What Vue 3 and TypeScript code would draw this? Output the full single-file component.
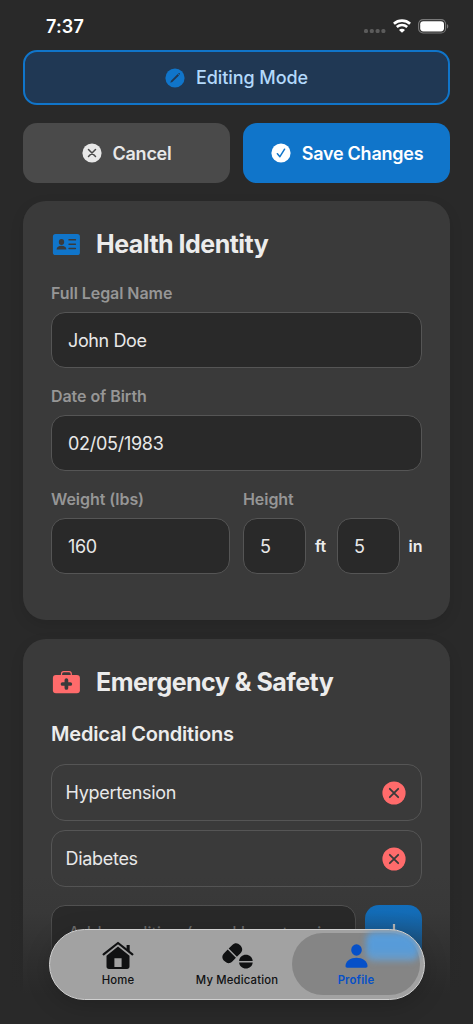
<script setup lang="ts">
import { ref } from 'vue'

interface Tab {
  id: string
  label: string
}

const fullName = ref('John Doe')
const birthDate = ref('02/05/1983')
const weight = ref('160')
const feet = ref('5')
const inches = ref('5')
const newCondition = ref('')
const conditions = ref<string[]>(['Hypertension', 'Diabetes'])
const activeTab = ref('profile')
const tabs: Tab[] = [
  { id: 'home', label: 'Home' },
  { id: 'medication', label: 'My Medication' },
  { id: 'profile', label: 'Profile' },
]

function removeCondition(index: number): void {
  conditions.value.splice(index, 1)
}

function addCondition(): void {
  const value = newCondition.value.trim()
  if (value) conditions.value.push(value)
  newCondition.value = ''
}
</script>

<template>
  <div class="screen">
    <header class="status">
      <span class="time">7:37</span>
      <div class="indicators">
        <svg class="dots" width="22" height="4" viewBox="0 0 22 4" fill="#5b5b5b">
          <rect x="0" width="4" height="4" rx="1.5" /><rect x="5.8" width="4" height="4" rx="1.5" />
          <rect x="11.6" width="4" height="4" rx="1.5" /><rect x="17.4" width="4" height="4" rx="1.5" />
        </svg>
        <svg class="wifi" width="18" height="14" viewBox="0 0 18 14" fill="none" stroke="#fff">
          <path d="M.9 4.7C5.5.5 12.5.5 17.1 4.7" stroke-width="2.7" />
          <path d="M3.8 8c3-2.6 7.4-2.6 10.4 0" stroke-width="2.6" />
          <path d="M9 13.8 6 10.9c1.6-1.6 4.4-1.6 6 0z" fill="#fff" stroke="none" />
        </svg>
        <svg class="battery" width="31" height="15" viewBox="0 0 31 15">
          <rect x=".6" y=".6" width="27" height="13.4" rx="4.5" fill="none" stroke="#797979" stroke-width="1.1" />
          <rect x="2.2" y="2.2" width="23.8" height="10.2" rx="3.1" fill="#fff" />
          <path d="M29 5.2c1.7.5 1.7 3.7 0 4.2z" fill="#797979" />
        </svg>
      </div>
    </header>

    <main class="content">
      <div class="banner">
        <svg class="round-icon" viewBox="0 0 20 20">
          <circle cx="10" cy="10" r="9.6" fill="#1075ca" />
          <path d="M5.3 14.8l.7-2 6.7-6.7 1.3 1.3-6.7 6.7zM13.2 5.6l.5-.5c.7-.6 1.8.5 1.2 1.2l-.5.5z" fill="#203854" />
        </svg>
        <span class="banner-text">Editing Mode</span>
      </div>

      <div class="actions">
        <button class="action cancel">
          <svg class="round-icon" viewBox="0 0 20 20">
            <circle cx="10" cy="10" r="9.6" fill="#e8e8e8" />
            <path d="M6.5 6.5l7 7m0-7l-7 7" stroke="#4a4a4a" stroke-width="1.5" stroke-linecap="round" />
          </svg>
          <span class="cancel-text">Cancel</span>
        </button>
        <button class="action save">
          <svg class="round-icon" viewBox="0 0 20 20">
            <circle cx="10" cy="10" r="9.6" fill="#fff" />
            <path d="M6.4 10.7l2.5 3 4.7-7.5" fill="none" stroke="#1075ca" stroke-width="1.5" stroke-linecap="round" stroke-linejoin="round" />
          </svg>
          <span class="save-text">Save Changes</span>
        </button>
      </div>

      <section class="card identity">
        <div class="heading">
          <svg class="heading-icon" viewBox="0 0 30 24">
            <rect x="1.9" y="1" width="27" height="21" rx="2.6" fill="#1075ca" />
            <g fill="#3a3a3a">
              <ellipse cx="10.5" cy="9" rx="2.7" ry="3" />
              <path d="M5.6 16.5c0-2.6 2.2-3.7 4.9-3.7s4.9 1.1 4.9 3.7z" />
              <rect x="17.3" y="6.1" width="7.8" height="1.5" rx=".7" />
              <rect x="17.3" y="10.5" width="7.8" height="1.5" rx=".7" />
              <rect x="17.3" y="14.8" width="7.8" height="1.5" rx=".7" />
            </g>
          </svg>
          <h2>Health Identity</h2>
        </div>

        <label class="field">
          <span class="label">Full Legal Name</span>
          <input v-model="fullName" class="input" />
        </label>
        <label class="field">
          <span class="label">Date of Birth</span>
          <input v-model="birthDate" class="input date" />
        </label>
        <div class="measures">
          <label class="field">
            <span class="label">Weight (lbs)</span>
            <input v-model="weight" class="input" />
          </label>
          <div class="field">
            <span class="label">Height</span>
            <div class="height-row">
              <input v-model="feet" class="input small" /><span class="unit ft">ft</span>
              <input v-model="inches" class="input small" /><span class="unit in">in</span>
            </div>
          </div>
        </div>
      </section>

      <section class="card emergency">
        <div class="heading">
          <svg class="heading-icon" viewBox="0 0 30 24">
            <path d="M10.5 4.7V2.9c0-1.7.7-2.3 2.2-2.3h5.4c1.5 0 2.2.6 2.2 2.3v1.8" fill="none" stroke="#ff6b6b" stroke-width="1.2" />
            <rect x="1.9" y="4" width="27" height="18.2" rx="3" fill="#ff6b6b" />
            <path d="M15.4 9.1v7.8M11.5 13h7.8" stroke="#3a3a3a" stroke-width="3.7" stroke-linecap="round" />
          </svg>
          <h2>Emergency &amp; Safety</h2>
        </div>
        <h3>Medical Conditions</h3>
        <ul class="conditions">
          <li v-for="(condition, index) in conditions" :key="condition">
            <span>{{ condition }}</span>
            <button class="remove" @click="removeCondition(index)">
              <svg width="24" height="24" viewBox="0 0 24 24">
                <circle cx="12" cy="12" r="11.6" fill="#ff6b6b" />
                <path d="M7.8 7.8l8.4 8.4m0-8.4l-8.4 8.4" stroke="#3a3a3a" stroke-width="1.8" stroke-linecap="round" />
              </svg>
            </button>
          </li>
        </ul>
        <div class="add-row">
          <input v-model="newCondition" class="input add-input" placeholder="Add condition (e.g., Hypertension)" />
          <button class="add" @click="addCondition">
            <svg width="20" height="20" viewBox="0 0 20 20"><path d="M10 0v20M0 10h20" stroke="#e8e8e8" stroke-width="2.2" /></svg>
          </button>
        </div>
      </section>
    </main>

    <div class="fade"></div>
    <nav class="tabbar">
      <button v-for="tab in tabs" :key="tab.id" class="tab" :class="[tab.id, { active: tab.id === activeTab }]" @click="activeTab = tab.id">
        <svg v-if="tab.id === 'home'" class="tab-icon" viewBox="0 0 32 28">
          <path d="M1.6 13.3 16 2l14.4 11.3" fill="none" stroke="currentColor" stroke-width="2.2" stroke-linecap="round" stroke-linejoin="round" />
          <path d="M24.6 4.1h3.1v7.1l-3.1-2.4z" fill="currentColor" />
          <path fill-rule="evenodd" d="M16 5.5l11.5 9.2v10.7c0 1.6-.9 2.5-2.5 2.5H7c-1.6 0-2.5-.9-2.5-2.5V14.7zM12.4 17.3v8.8h7.2v-8.8z" fill="currentColor" />
        </svg>
        <svg v-else-if="tab.id === 'medication'" class="tab-icon" viewBox="0 0 32 28">
          <g fill="currentColor" transform="translate(0 1)">
            <path transform="rotate(45 11.3 11.2)" d="M5.5 10.5V5.4C5.5 1.8 7.9 0 11.3 0s5.8 1.8 5.8 5.4v5.1z" />
            <path transform="rotate(45 11.3 11.2)" d="M5.5 11.9h11.6V17c0 3.6-2.4 5.4-5.8 5.4S5.5 20.6 5.5 17z" />
            <path d="M18.1 18.9c.3-3.7 3.2-6.2 6.8-6.2s6.5 2.5 6.8 6.2zM18.1 20.4h13.6c-.3 3.6-3.2 6-6.8 6s-6.5-2.4-6.8-6z" />
          </g>
        </svg>
        <svg v-else class="tab-icon" viewBox="0 0 32 28" fill="currentColor">
          <ellipse cx="16.5" cy="9" rx="5.3" ry="5.7" />
          <path d="M5.5 25c0-4.8 5.1-8.2 11-8.2s11 3.4 11 8.2c0 1.1-.6 1.7-1.8 1.7H7.3c-1.2 0-1.8-.6-1.8-1.7z" />
        </svg>
        <span>{{ tab.label }}</span>
      </button>
    </nav>
  </div>
</template>

<style>
html,
body {
  margin: 0;
  background: #292929;
}
</style>

<style scoped>
* {
  box-sizing: border-box;
}
.screen {
  position: relative;
  width: 100%;
  height: 1024px;
  overflow: hidden;
  background: #292929;
  color: #ececec;
  font-family: Inter, 'Liberation Sans', sans-serif;
}
button {
  margin: 0;
  padding: 0;
  border: 0;
  font: inherit;
  color: inherit;
  background: none;
}
svg {
  display: block;
  flex: none;
}
.status {
  height: 50px;
  padding: 2px 24px 0 46px;
  display: flex;
  align-items: center;
  justify-content: space-between;
}
.time {
  font-size: 18px;
  font-weight: 600;
  letter-spacing: 0.15px;
  color: #fff;
}
.indicators {
  display: flex;
  align-items: center;
}
.dots {
  margin: 9px 7px 0 0;
}
.wifi {
  margin-right: 7px;
}
.content {
  padding: 0 23px;
}
.banner {
  height: 55px;
  border: 2px solid #1075ca;
  border-radius: 14px;
  background: #203854;
  color: #b3d9fb;
  display: flex;
  align-items: center;
  justify-content: center;
  gap: 11px;
  font-size: 18px;
  font-weight: 550;
}
.round-icon {
  width: 20px;
  height: 20px;
}
.actions {
  margin-top: 18px;
  display: grid;
  grid-template-columns: 1fr 1fr;
  gap: 13px;
}
.action {
  height: 60px;
  border-radius: 14px;
  display: flex;
  align-items: center;
  justify-content: center;
  gap: 11px;
  font-size: 18px;
  font-weight: 600;
}
.cancel {
  background: #4a4a4a;
  color: #e8e8e8;
}
.save {
  background: #1075ca;
  color: #fff;
}
.banner-text {
  letter-spacing: -0.07px;
}
.cancel-text,
.save-text {
  letter-spacing: -0.25px;
}
.save .round-icon {
  margin-left: 1px;
}
.card {
  margin-top: 18px;
  padding: 29px 28px 0;
  border-radius: 23px;
  background: #3a3a3a;
  box-shadow: 0 5px 14px rgba(0, 0, 0, 0.1);
}
.identity {
  height: 419px;
}
.emergency {
  height: 480px;
  margin-top: 19px;
}
.heading {
  height: 29px;
  display: flex;
  align-items: center;
  gap: 15px;
}
.heading-icon {
  width: 30px;
  height: 24px;
}
h2,
h3 {
  margin: 0;
}
h2 {
  font-size: 25px;
  line-height: 29px;
  font-weight: 700;
  letter-spacing: -0.52px;
}
.field {
  display: block;
}
.identity > .field {
  height: 103px;
}
.heading + .field {
  margin-top: 24px;
}
.label {
  display: block;
  height: 29px;
  line-height: 20px;
  font-size: 16px;
  font-weight: 600;
  letter-spacing: -0.06px;
  color: #969696;
  white-space: nowrap;
}
.input {
  display: block;
  width: 100%;
  height: 56px;
  padding: 0 16px;
  border: 1px solid #555;
  border-radius: 14px;
  outline: 0;
  background: #292929;
  color: #e8e8e8;
  font: 400 18px Inter, 'Liberation Sans', sans-serif;
  letter-spacing: -0.38px;
}
.date {
  letter-spacing: -0.28px;
}
.measures {
  display: grid;
  grid-template-columns: 179px 179px;
  gap: 13px;
}
.height-row {
  display: flex;
  align-items: center;
}
.small {
  flex: none;
  width: 63px;
}
.unit {
  font-size: 16px;
  font-weight: 600;
}
.ft {
  flex: none;
  width: 31px;
  padding-left: 9px;
}
.in {
  padding-left: 8.5px;
}
h3 {
  margin-top: 23px;
  font-size: 20px;
  line-height: 28px;
  font-weight: 600;
  letter-spacing: -0.18px;
}
.conditions {
  list-style: none;
  margin: 16px 0 0;
  padding: 0;
  display: grid;
  gap: 9px;
}
li {
  height: 57px;
  padding: 0 15px 0 13.5px;
  border: 1px solid #555;
  border-radius: 14px;
  display: flex;
  align-items: center;
  justify-content: space-between;
  font-size: 18px;
  color: #e8e8e8;
  letter-spacing: -0.3px;
}
.add-row {
  margin-top: 18px;
  display: grid;
  grid-template-columns: 305px 57px;
  gap: 9px;
}
.add-input {
  height: 57px;
}
.add-input::placeholder {
  color: #858585;
  opacity: 1;
}
.add {
  width: 57px;
  height: 57px;
  border-radius: 14px;
  background: #1075ca;
  display: flex;
  align-items: center;
  justify-content: center;
}
/* Scrim that dissolves the scrolling content below the tab bar */
.fade {
  position: absolute;
  inset: 875px 0 0;
  background: linear-gradient(rgba(41, 41, 41, 0), rgba(41, 41, 41, 0.12) 25%, rgba(41, 41, 41, 0.7) 60%, #292929 80%);
}
.tabbar {
  position: absolute;
  left: 49px;
  top: 929px;
  width: 376px;
  height: 71px;
  padding: 3px 4px 4px;
  display: flex;
  border: 1px solid #d0d0d0;
  border-radius: 36px;
  background: #a2a2a2;
  box-shadow: 0 5px 24px rgba(0, 0, 0, 0.18);
  color: #101112;
  overflow: hidden;
}
.tab {
  position: relative;
  width: 128px;
  height: 62px;
  padding-top: 8px;
  display: flex;
  flex-direction: column;
  align-items: center;
  border-radius: 31px;
  font-size: 11.3px;
  line-height: 14px;
  font-weight: 550;
  letter-spacing: 0.18px;
}
.tab-icon {
  width: 32px;
  height: 28px;
  margin-bottom: 4px;
}
.tab span {
  white-space: nowrap;
}
.home {
  flex: 0 0 128px;
}
.medication {
  flex: 0 0 110px;
}
.profile {
  flex: 0 0 128px;
}
.active {
  z-index: 0;
  color: #0650c8;
  background: #858585;
  font-weight: 600;
}
/* Blurred tint of the add button seen through the glass */
.active::before {
  content: '';
  position: absolute;
  z-index: -1;
  left: 74px;
  top: -1px;
  width: 53px;
  height: 29px;
  border-radius: 8px 20px 8px 8px;
  background: linear-gradient(#5b9dd8, #559bda 55%, #6f9cc4);
  filter: blur(3px);
}
</style>
